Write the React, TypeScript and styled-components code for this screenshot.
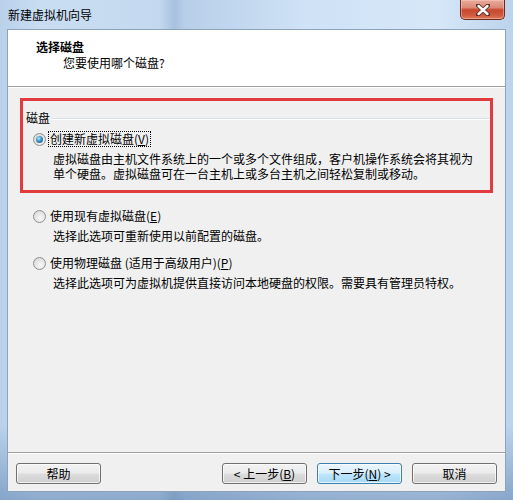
import React from 'react';
import styled, { createGlobalStyle } from 'styled-components';

const GlobalStyle = createGlobalStyle`
  html, body {
    margin: 0;
    padding: 0;
  }
  body {
    font-family: "Noto Sans CJK SC", "Liberation Sans", sans-serif;
    font-size: 12px;
    color: #000000;
  }
  * {
    box-sizing: border-box;
  }
`;

const Window = styled.div`
  width: 513px;
  height: 500px;
  display: flex;
  flex-direction: column;
  padding: 0 7px 8px 7px;
  background:
    linear-gradient(180deg, rgba(255, 255, 255, 0) 85%, rgba(70, 110, 160, 0.45) 100%),
    linear-gradient(
      90deg,
      #b9d1ea 0%,
      #c9ddf2 8%,
      #c4d9ef 31%,
      #a7c1de 34%,
      #b8cfe9 36%,
      #cfe2f6 60%,
      #d6e7f8 85%,
      #bcd3ec 100%
    );
`;

const TitleBar = styled.div`
  height: 29px;
  flex-shrink: 0;
  display: flex;
  align-items: flex-start;
  justify-content: space-between;
`;

const TitleText = styled.div`
  padding: 6px 0 0 1px;
  line-height: 18px;
  font-size: 12px;
  color: #000000;
`;

const CloseButton = styled.div`
  width: 45px;
  height: 20px;
  margin-right: 1px;
  display: flex;
  align-items: center;
  justify-content: center;
  border: 1px solid #6b2a1e;
  border-top: none;
  border-radius: 0 0 5px 5px;
  background: linear-gradient(
    180deg,
    #e9ab9c 0%,
    #dc8a76 40%,
    #c7472d 52%,
    #cf5a3f 80%,
    #e07a5c 100%
  );
  box-shadow: inset 0 0 0 1px rgba(255, 210, 200, 0.45);
`;

const Client = styled.div`
  flex: 1;
  display: flex;
  flex-direction: column;
  border: 1px solid #8ea3bb;
  background: #f0f0f0;
`;

const Header = styled.div`
  height: 57px;
  flex-shrink: 0;
  background: #ffffff;
  border-bottom: 1px solid #a0a0a0;
  box-shadow: 0 1px 0 #ffffff;
  padding: 9px 0 0 28px;
`;

const HeaderTitle = styled.div`
  font-weight: bold;
  line-height: 16px;
`;

const HeaderSubtitle = styled.div`
  line-height: 16px;
  padding-left: 27px;
`;

const Body = styled.div`
  flex: 1;
  padding: 11px 12px 0 12px;
  display: flex;
  flex-direction: column;
`;

const Highlight = styled.div`
  border: 3px solid #e23b3e;
  padding: 9px 0 9px 3px;
`;

const GroupLabelRow = styled.div`
  display: flex;
  align-items: center;
  line-height: 16px;
`;

const GroupLine = styled.div`
  flex: 1;
  height: 1px;
  margin-left: 2px;
  background: #d5dfe5;
  box-shadow: 0 1px 0 #ffffff;
`;

const Option = styled.div<{ $indent: number; $top: number }>`
  margin-top: ${p => p.$top}px;
  padding-left: ${p => p.$indent}px;
`;

const RadioRow = styled.div`
  display: flex;
  align-items: center;
  height: 16px;
`;

const RadioCircle = styled.span<{ $checked?: boolean }>`
  width: 13px;
  height: 13px;
  border-radius: 50%;
  border: 1px solid #8e8f8f;
  background: radial-gradient(circle at 60% 65%, #f7f7f7 0%, #e4e4e4 55%, #cfcfcf 100%);
  display: flex;
  align-items: center;
  justify-content: center;
  flex-shrink: 0;

  &::after {
    content: '';
    display: ${p => (p.$checked ? 'block' : 'none')};
    width: 7px;
    height: 7px;
    border-radius: 50%;
    background: radial-gradient(circle at 40% 35%, #b9ecff 0%, #3b8fc2 45%, #174d75 100%);
  }
`;

const RadioLabel = styled.span<{ $focused?: boolean }>`
  margin-left: 2px;
  padding: 0 1px;
  line-height: 14px;
  border: 1px ${p => (p.$focused ? 'dotted #000000' : 'solid transparent')};
`;

const Description = styled.div`
  margin-top: 4px;
  padding-left: 20px;
`;

const DescLine = styled.div`
  height: 15px;
  line-height: 15px;
  white-space: nowrap;
`;

const Footer = styled.div`
  flex-shrink: 0;
  height: 39px;
  border-top: 1px solid #a0a0a0;
  box-shadow: inset 0 1px 0 #ffffff;
  padding: 10px 8px 0 8px;
  display: flex;
  align-items: flex-start;
`;

const ButtonGroup = styled.div`
  margin-left: auto;
  display: flex;
  gap: 10px;
`;

const Button = styled.div<{ $primary?: boolean }>`
  width: 85px;
  height: 21px;
  border-radius: 3px;
  display: flex;
  align-items: center;
  justify-content: center;
  line-height: 14px;
  border: 1px solid ${p => (p.$primary ? '#3c7fb1' : '#707070')};
  background: ${p =>
    p.$primary
      ? 'linear-gradient(180deg, #eaf6fd 0%, #d9f0fc 48%, #bee6fd 52%, #a7d9f5 100%)'
      : 'linear-gradient(180deg, #f2f2f2 0%, #ebebeb 48%, #dddddd 52%, #cfcfcf 100%)'};
  box-shadow: inset 0 0 0 1px rgba(255, 255, 255, 0.7);
`;

const options = [
  {
    label: '使用现有虚拟磁盘(',
    key: 'E',
    desc: ['选择此选项可重新使用以前配置的磁盘。'],
    top: 15,
  },
  {
    label: '使用物理磁盘 (适用于高级用户)(',
    key: 'P',
    desc: ['选择此选项可为虚拟机提供直接访问本地硬盘的权限。需要具有管理员特权。'],
    top: 12,
  },
];

const newDiskDesc = [
  '虚拟磁盘由主机文件系统上的一个或多个文件组成，客户机操作系统会将其视为',
  '单个硬盘。虚拟磁盘可在一台主机上或多台主机之间轻松复制或移动。',
];

export default function App() {
  return (
    <>
      <GlobalStyle />
      <Window>
        <TitleBar>
          <TitleText>新建虚拟机向导</TitleText>
          <CloseButton>
            <svg width="14" height="12" viewBox="0 0 14 12">
              <path
                d="M2 1.5 L12 10.5 M12 1.5 L2 10.5"
                stroke="#5a2a22"
                strokeWidth="4.2"
                strokeLinecap="round"
              />
              <path
                d="M2.5 2 L11.5 10 M11.5 2 L2.5 10"
                stroke="#ffffff"
                strokeWidth="2.4"
                strokeLinecap="round"
              />
            </svg>
          </CloseButton>
        </TitleBar>
        <Client>
          <Header>
            <HeaderTitle>选择磁盘</HeaderTitle>
            <HeaderSubtitle>您要使用哪个磁盘?</HeaderSubtitle>
          </Header>
          <Body>
            <Highlight>
              <GroupLabelRow>
                磁盘
                <GroupLine />
              </GroupLabelRow>
              <Option $indent={7} $top={5}>
                <RadioRow>
                  <RadioCircle $checked />
                  <RadioLabel $focused>
                    创建新虚拟磁盘(<u>V</u>)
                  </RadioLabel>
                </RadioRow>
                <Description>
                  {newDiskDesc.map(d => (
                    <DescLine key={d}>{d}</DescLine>
                  ))}
                </Description>
              </Option>
            </Highlight>
            {options.map(o => (
              <Option key={o.key} $indent={13} $top={o.top}>
                <RadioRow>
                  <RadioCircle />
                  <RadioLabel>
                    {o.label}
                    <u>{o.key}</u>)
                  </RadioLabel>
                </RadioRow>
                <Description>
                  {o.desc.map(d => (
                    <DescLine key={d}>{d}</DescLine>
                  ))}
                </Description>
              </Option>
            ))}
          </Body>
          <Footer>
            <Button>帮助</Button>
            <ButtonGroup>
              <Button>
                &lt; 上一步(<u>B</u>)
              </Button>
              <Button $primary>
                下一步(<u>N</u>) &gt;
              </Button>
              <Button>取消</Button>
            </ButtonGroup>
          </Footer>
        </Client>
      </Window>
    </>
  );
}
